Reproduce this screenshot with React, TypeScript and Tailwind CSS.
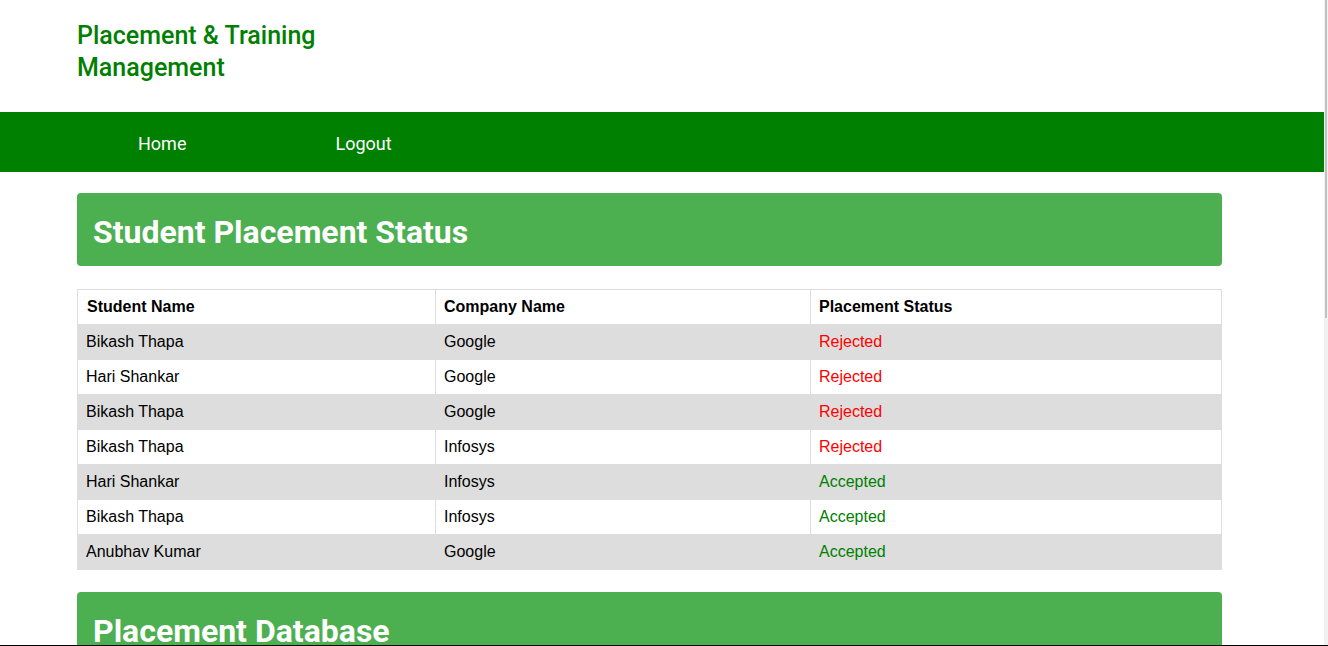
import React from 'react';

type Row = { student: string; company: string; status: 'Rejected' | 'Accepted' };

const rows: Row[] = [
  { student: 'Bikash Thapa', company: 'Google', status: 'Rejected' },
  { student: 'Hari Shankar', company: 'Google', status: 'Rejected' },
  { student: 'Bikash Thapa', company: 'Google', status: 'Rejected' },
  { student: 'Bikash Thapa', company: 'Infosys', status: 'Rejected' },
  { student: 'Hari Shankar', company: 'Infosys', status: 'Accepted' },
  { student: 'Bikash Thapa', company: 'Infosys', status: 'Accepted' },
  { student: 'Anubhav Kumar', company: 'Google', status: 'Accepted' },
];

const SectionTitle = ({ children }: { children: React.ReactNode }) => (
  <div className="flex h-[73px] items-center rounded-[4px] bg-[#4caf50] px-4 pt-[5px]">
    <h2 className="text-[32px] font-bold leading-none text-white">{children}</h2>
  </div>
);

export default function App() {
  return (
    <div className="flex h-[646px] w-[1328px] overflow-hidden border-b border-black bg-white font-['Roboto',sans-serif]">
      <main className="w-[1324px] shrink-0">
        {/* header */}
        <header className="h-[112px] px-[77px] pt-[20px]">
          <h1 className="text-[25px] font-medium leading-[32px] text-[#008000]">
            Placement &amp; Training
            <br />
            Management
          </h1>
        </header>

        {/* nav */}
        <nav className="flex h-[60px] items-center gap-[149px] bg-[#008000] pl-[138px] pt-[3px] text-[18px] text-white">
          <a href="#">Home</a>
          <a href="#">Logout</a>
        </nav>

        <div className="ml-[77px] w-[1145px] pt-[21px]">
          <SectionTitle>Student Placement Status</SectionTitle>

          <table className="mt-[23px] w-full border-collapse font-['Liberation_Sans',Arial,sans-serif] text-[16px] text-black">
            <thead>
              <tr>
                <th className="h-[35px] w-[358px] border border-[#ddd] px-[9px] text-left font-bold">Student Name</th>
                <th className="h-[35px] w-[375px] border border-[#ddd] px-[8px] text-left font-bold">Company Name</th>
                <th className="h-[35px] border border-[#ddd] px-[8px] text-left font-bold">Placement Status</th>
              </tr>
            </thead>
            <tbody>
              {rows.map((r, i) => (
                <tr key={i} className={i % 2 === 0 ? 'bg-[#dddddd]' : 'bg-white'}>
                  <td className="h-[35px] border border-[#ddd] px-[8px]">{r.student}</td>
                  <td className="h-[35px] border border-[#ddd] px-[8px]">{r.company}</td>
                  <td
                    className={
                      'h-[35px] border border-[#ddd] px-[8px] ' +
                      (r.status === 'Rejected' ? 'text-[#ff0000]' : 'text-[#008000]')
                    }
                  >
                    {r.status}
                  </td>
                </tr>
              ))}
            </tbody>
          </table>

          <div className="mt-[22px]">
            <SectionTitle>Placement Database</SectionTitle>
          </div>
        </div>
      </main>

      {/* scrollbar */}
      <div className="w-[4px] bg-[#f1f1f1]">
        <div className="ml-[1px] h-[318px] w-[2px] bg-[#c1c1c1]" />
      </div>
    </div>
  );
}
